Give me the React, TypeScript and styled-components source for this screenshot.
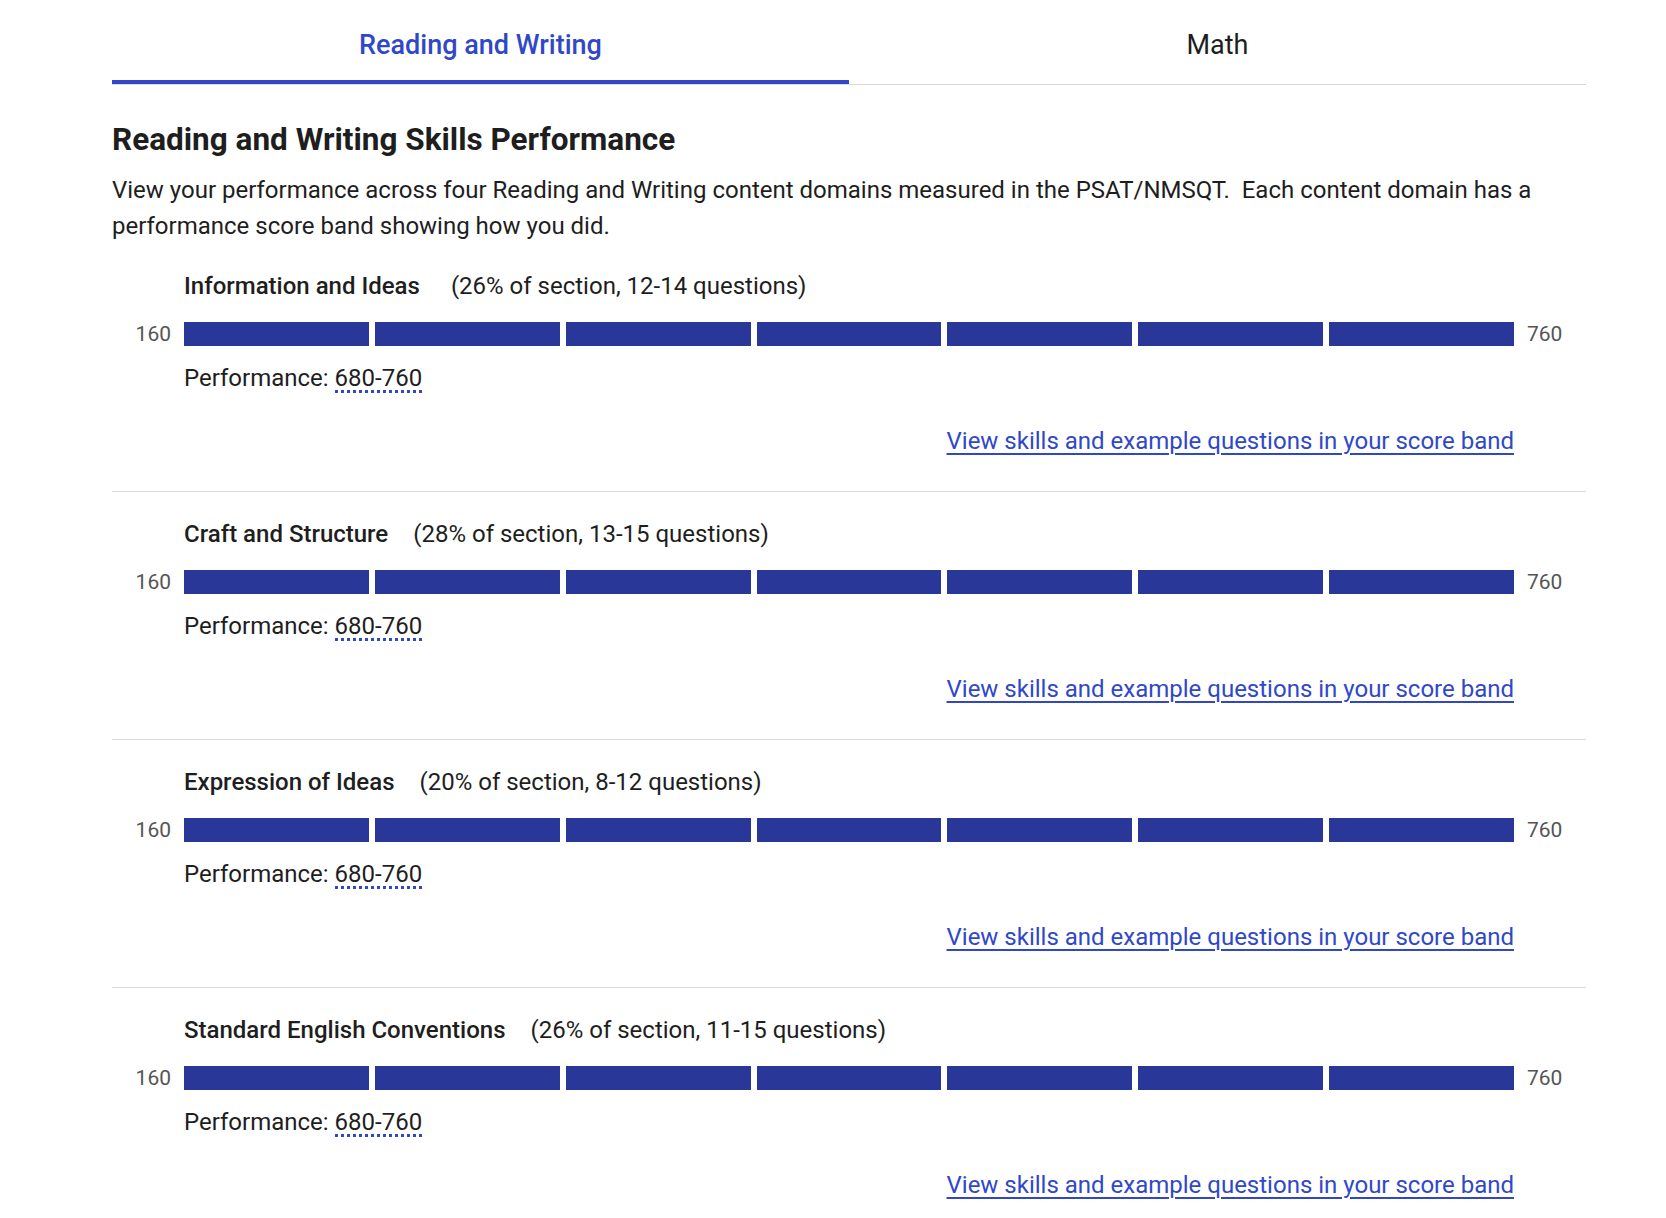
import React from 'react'
import styled, { createGlobalStyle } from 'styled-components'

const GlobalStyle = createGlobalStyle`
  body {
    margin: 0;
    background: #ffffff;
    font-family: Roboto, "Liberation Sans", Arial, sans-serif;
    color: #1e1e1e;
  }
`

const Page = styled.div`
  width: 1474px;
  padding-left: 112px;
`

const Tabs = styled.div`
  display: grid;
  grid-template-columns: 1fr 1fr;
  border-bottom: 1px solid #d9d9d9;
`

const Tab = styled.div<{ $active?: boolean }>`
  height: 84px;
  display: flex;
  align-items: center;
  justify-content: center;
  padding-top: 6px;
  box-sizing: border-box;
  font-size: 27px;
  font-weight: ${({ $active }) => ($active ? 500 : 400)};
  color: ${({ $active }) => ($active ? '#3048c8' : '#1e1e1e')};
  box-shadow: ${({ $active }) => ($active ? 'inset 0 -4px 0 #3048c8' : 'none')};
`

const Heading = styled.h2`
  margin: 37px 0 0;
  font-size: 31.5px;
  line-height: 36px;
  font-weight: 700;
  color: #1e1e1e;
`

const Intro = styled.p`
  margin: 14px 0 0;
  font-size: 24px;
  line-height: 36px;
  color: #1e1e1e;
`

const Domain = styled.section<{ $last?: boolean }>`
  padding: 27px 0 35px;
  border-bottom: ${({ $last }) => ($last ? 'none' : '1px solid #dcdcdc')};
`

const TitleRow = styled.div<{ $gap: number }>`
  display: flex;
  gap: ${({ $gap }) => $gap}px;
  padding-left: 72px;
  font-size: 24px;
  line-height: 30px;
`

const DomainName = styled.span`
  font-weight: 500;
`

const DomainNote = styled.span`
  font-weight: 400;
`

const BarRow = styled.div`
  display: flex;
  align-items: center;
  gap: 13px;
  margin-top: 21px;
`

const ScaleLabel = styled.span<{ $left?: boolean }>`
  width: ${({ $left }) => ($left ? '59px' : 'auto')};
  text-align: ${({ $left }) => ($left ? 'right' : 'left')};
  font-size: 21px;
  line-height: 24px;
  color: #555555;
`

const Bar = styled.div`
  width: 1330px;
  height: 24px;
  display: grid;
  grid-template-columns: repeat(7, 1fr);
  gap: 6px;
`

const Segment = styled.div<{ $filled: boolean }>`
  background: ${({ $filled }) => ($filled ? '#293798' : '#e3e3e3')};
`

const Performance = styled.div`
  margin-top: 17px;
  padding-left: 72px;
  font-size: 24px;
  line-height: 30px;
`

const Band = styled.span`
  display: inline-block;
  line-height: 24px;
  border-bottom: 3px dotted #3048c8;
`

const LinkRow = styled.div`
  width: 1402px;
  margin-top: 33px;
  text-align: right;
  font-size: 24px;
  line-height: 30px;
`

const BandLink = styled.a`
  color: #3048c8;
  text-decoration: underline;
  text-underline-offset: 4px;
  cursor: pointer;
`

type DomainData = {
  name: string
  note: string
  band: string
  filled: number
  gap: number
}

const domains: DomainData[] = [
  { name: 'Information and Ideas', note: '(26% of section, 12-14 questions)', band: '680-760', filled: 7, gap: 31 },
  { name: 'Craft and Structure', note: '(28% of section, 13-15 questions)', band: '680-760', filled: 7, gap: 25 },
  { name: 'Expression of Ideas', note: '(20% of section, 8-12 questions)', band: '680-760', filled: 7, gap: 25 },
  { name: 'Standard English Conventions', note: '(26% of section, 11-15 questions)', band: '680-760', filled: 7, gap: 25 },
]

const DomainBlock: React.FC<{ data: DomainData; last: boolean }> = ({ data, last }) => (
  <Domain $last={last}>
    <TitleRow $gap={data.gap}>
      <DomainName>{data.name}</DomainName>
      <DomainNote>{data.note}</DomainNote>
    </TitleRow>
    <BarRow>
      <ScaleLabel $left>160</ScaleLabel>
      <Bar>
        {Array.from({ length: 7 }).map((_, i) => (
          <Segment key={i} $filled={i < data.filled} />
        ))}
      </Bar>
      <ScaleLabel>760</ScaleLabel>
    </BarRow>
    <Performance>
      Performance: <Band>{data.band}</Band>
    </Performance>
    <LinkRow>
      <BandLink>View skills and example questions in your score band</BandLink>
    </LinkRow>
  </Domain>
)

export default function App() {
  return (
    <>
      <GlobalStyle />
      <Page>
        <Tabs>
          <Tab $active>Reading and Writing</Tab>
          <Tab>Math</Tab>
        </Tabs>
        <Heading>Reading and Writing Skills Performance</Heading>
        <Intro>
          View your performance across four Reading and Writing content domains measured in the PSAT/NMSQT.&nbsp; Each
          content domain has a performance score band showing how you did.
        </Intro>
        {domains.map((d, i) => (
          <DomainBlock key={d.name} data={d} last={i === domains.length - 1} />
        ))}
      </Page>
    </>
  )
}
